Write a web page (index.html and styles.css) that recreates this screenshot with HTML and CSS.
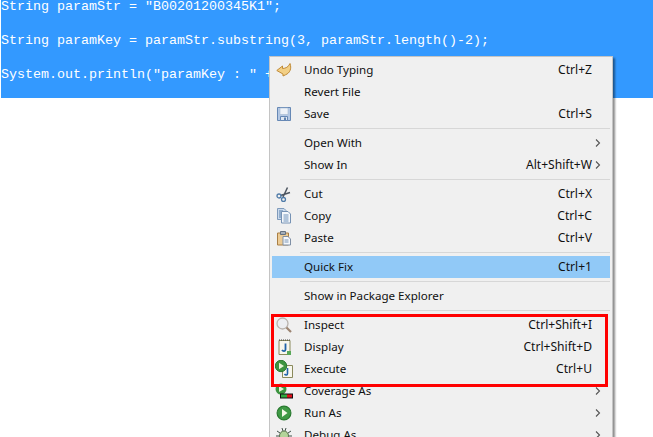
FILE: index.html
```html
<!DOCTYPE html>
<html lang="en">
<head>
<meta charset="utf-8">
<title>Context menu</title>
<link rel="stylesheet" href="styles.css">
</head>
<body>
<pre class="code"><span class="sel">String paramStr = "B00201200345K1";

String paramKey = paramStr.substring(3, paramStr.length()-2);

System.out.println("paramKey : " + paramKey);</span></pre>
<div class="menu">
  <div class="row"><span class="ic"><svg viewBox="0 0 16 16" width="16" height="16"><path d="M.8 8.500 6.500 4V6.500C9.500 6.500 12.500 5 14 1.500 15.800 6.500 14 11 9.500 12.800L7 14V12Z" fill="#f2cf85" stroke="#c08a35" stroke-linejoin="round"/></svg></span><span class="lb">Undo Typing</span><span class="sc">Ctrl+Z</span><span class="ar"></span></div>
  <div class="row"><span class="ic"></span><span class="lb">Revert File</span><span class="sc"></span><span class="ar"></span></div>
  <div class="row"><span class="ic"><svg viewBox="0 0 16 16" width="16" height="16"><path d="M1.500 1.500H14.500V14.500H1.500Z" fill="#b4c8e4" stroke="#6688b5"/><path d="M4 2H12V8.500H4Z" fill="#eef2f8" stroke="#a5b8d2" stroke-width=".6"/><path d="M4.500 10.500H11.500V14.500H4.500Z" fill="#dfe7f2" stroke="#6688b5"/><path d="M8 11.500H10V14H8Z" fill="#5f82b0"/></svg></span><span class="lb">Save</span><span class="sc">Ctrl+S</span><span class="ar"></span></div>
  <div class="sep"></div>
  <div class="row"><span class="ic"></span><span class="lb">Open With</span><span class="sc"></span><span class="ar"><svg viewBox="0 0 6 8" width="6" height="8"><path d="M1 .5 4.500 4 1 7.500" fill="none" stroke="#555" stroke-width="1.100"/></svg></span></div>
  <div class="row"><span class="ic"></span><span class="lb">Show In</span><span class="sc">Alt+Shift+W</span><span class="ar"><svg viewBox="0 0 6 8" width="6" height="8"><path d="M1 .5 4.500 4 1 7.500" fill="none" stroke="#555" stroke-width="1.100"/></svg></span></div>
  <div class="sep"></div>
  <div class="row"><span class="ic"><svg viewBox="0 0 16 16" width="16" height="16"><path d="M11.500 1.500 7 11M14 6.500 4.500 9.500" fill="none" stroke="#4d5560" stroke-width="1.500"/><circle cx="3" cy="10" r="2" fill="none" stroke="#4f7ba8" stroke-width="1.300"/><circle cx="7.500" cy="13.500" r="2" fill="none" stroke="#4f7ba8" stroke-width="1.300"/></svg></span><span class="lb">Cut</span><span class="sc">Ctrl+X</span><span class="ar"></span></div>
  <div class="row"><span class="ic"><svg viewBox="0 0 16 16" width="16" height="16"><path d="M1.500 .5H8L10 2.500V11.500H1.500Z" fill="#c9d9ec" stroke="#7e9abb"/><path d="M3 3H7M3 5H5M3 7H5M3 9H5" stroke="#5b82ad"/><path d="M5.500 3.500H12L14.500 6V15H5.500Z" fill="#f4f7fb" stroke="#7692b4"/><path d="M7.500 7H12.500M7.500 9H12.500M7.500 11H12.500M7.500 13H12.500" stroke="#6f92ba"/></svg></span><span class="lb">Copy</span><span class="sc">Ctrl+C</span><span class="ar"></span></div>
  <div class="row"><span class="ic"><svg viewBox="0 0 16 16" width="16" height="16"><path d="M1.500 3H12.500V15H1.500Z" fill="#eccb95" stroke="#a97f45"/><path d="M4.500 1.500H9.500V4.500H4.500Z" fill="#a4aeba" stroke="#66717f"/><path d="M7 6.500H12L14.500 9V15H7Z" fill="#f6f8fb" stroke="#7f8fa5"/><path d="M8.500 10H12.500M8.500 12H12.500" stroke="#7a96b8"/></svg></span><span class="lb">Paste</span><span class="sc">Ctrl+V</span><span class="ar"></span></div>
  <div class="sep"></div>
  <div class="row active"><span class="ic"></span><span class="lb">Quick Fix</span><span class="sc">Ctrl+1</span><span class="ar"></span></div>
  <div class="sep"></div>
  <div class="row"><span class="ic"></span><span class="lb">Show in Package Explorer</span><span class="sc"></span><span class="ar"></span></div>
  <div class="sep"></div>
  <div class="row"><span class="ic"><svg viewBox="0 0 16 16" width="16" height="16"><circle cx="6.500" cy="6.500" r="5.500" fill="#eceef2" stroke="#b8b2ae" stroke-width="1.300"/><path d="M10.500 10.500 15 15" stroke="#9c8472" stroke-width="2.200"/></svg></span><span class="lb">Inspect</span><span class="sc">Ctrl+Shift+I</span><span class="ar"></span></div>
  <div class="row"><span class="ic"><svg viewBox="0 0 16 16" width="16" height="16"><path d="M3 1.500H14V15.500H3Z" fill="#f8f7ee" stroke="#8a8a5c"/><path d="M3 1H14" stroke="#444" stroke-dasharray="1 1"/><path d="M9.500 4.500V10.500C9.500 12.500 7 12.500 6 11" fill="none" stroke="#1f62a8" stroke-width="1.800"/><path d="M11 12H15V16H11Z" fill="#58a858"/></svg></span><span class="lb">Display</span><span class="sc">Ctrl+Shift+D</span><span class="ar"></span></div>
  <div class="row"><span class="ic"><svg viewBox="0 0 18 18" width="18" height="18"><path d="M7.500 5.500H17.500V17.500H7.500Z" fill="#f8f7ee" stroke="#8a8a5c"/><path d="M12.500 8V13.500C12.500 15.500 10.500 15.500 9.500 14" fill="none" stroke="#1f62a8" stroke-width="1.600"/><circle cx="6" cy="6" r="5.700" fill="#3c9440" stroke="#2a7a30"/><path d="M4 2.800 9 6 4 9.200Z" fill="#e8f4d8"/></svg></span><span class="lb">Execute</span><span class="sc">Ctrl+U</span><span class="ar"></span></div>
  <div class="row"><span class="ic"><svg viewBox="0 0 18 18" width="18" height="18"><circle cx="6" cy="7" r="5.500" fill="#3c9440"/><path d="M4 4 9 7 4 10Z" fill="#e8f4d8"/><path d="M5 11.500H18V16.500H5Z" fill="#111"/><path d="M12 12.500H17V15.500H12Z" fill="#e0101a"/><path d="M6 12.500H12V15.500H6Z" fill="#2fa83f"/></svg></span><span class="lb">Coverage As</span><span class="sc"></span><span class="ar"><svg viewBox="0 0 6 8" width="6" height="8"><path d="M1 .5 4.500 4 1 7.500" fill="none" stroke="#555" stroke-width="1.100"/></svg></span></div>
  <div class="row"><span class="ic"><svg viewBox="0 0 16 16" width="16" height="16"><circle cx="8" cy="8" r="6.900" fill="#3f9a45" stroke="#2a7a30" stroke-width="1.200"/><path d="M6 4 11.500 8 6 12Z" fill="#f4fae8"/></svg></span><span class="lb">Run As</span><span class="sc"></span><span class="ar"><svg viewBox="0 0 6 8" width="6" height="8"><path d="M1 .5 4.500 4 1 7.500" fill="none" stroke="#555" stroke-width="1.100"/></svg></span></div>
  <div class="row"><span class="ic"><svg viewBox="0 0 16 16" width="16" height="16"><path d="M1 4 4 6M15 4 12 6M0 9H3M16 9H13M1 14 4 12M15 14 12 12M6 1 7 4M10 1 9 4" stroke="#3f5048"/><ellipse cx="8" cy="9" rx="4.500" ry="5" fill="#b4d49a" stroke="#56724a"/></svg></span><span class="lb">Debug As</span><span class="sc"></span><span class="ar"><svg viewBox="0 0 6 8" width="6" height="8"><path d="M1 .5 4.500 4 1 7.500" fill="none" stroke="#555" stroke-width="1.100"/></svg></span></div>
</div>
<div class="mark"></div>
</body>
</html>
```
FILE: styles.css
```css
html, body {
  margin: 0;
  height: 437px;
  overflow: hidden;
  background: #fff;
}
.code {
  margin: 0;
  padding: 0 0 0 1px;
  font: 13.33px/17px "Liberation Mono", monospace;
  color: #fff;
  background: #fff;
}
.code .sel {
  display: block;
  height: 100px;
  margin-top: -2px;
  background: #3399ff;
}
.menu {
  position: absolute;
  left: 269px;
  top: 56px;
  width: 338px;
  height: 400px;
  padding: 2px 2px 0 2px;
  background: #f0f0f0;
  border: 1px solid #c4c4c4;
  box-shadow: 2px 2px 2px rgba(0, 0, 0, .45);
  font: 11.6px "Noto Sans", sans-serif;
  color: #111;
}
.row {
  display: flex;
  align-items: center;
  height: 22px;
}
.row.active {
  background: #91c9f7;
}
.ic {
  flex: none;
  display: flex;
  justify-content: center;
  width: 23px;
  margin-right: 9px;
}
.lb {
  flex: 1;
  padding-bottom: 1px;
}
.sc {
  flex: none;
  padding-bottom: 1px;
  font-size: 12.1px;
}
.ar {
  flex: none;
  display: flex;
  justify-content: flex-end;
  width: 9px;
  padding-right: 9px;
}
.sep {
  height: 1px;
  margin: 3px 0 3px 28px;
  background: #d7d7d7;
}
.mark {
  position: absolute;
  left: 271px;
  top: 314px;
  width: 331px;
  height: 67px;
  border: 3px solid #f00;
}
```
